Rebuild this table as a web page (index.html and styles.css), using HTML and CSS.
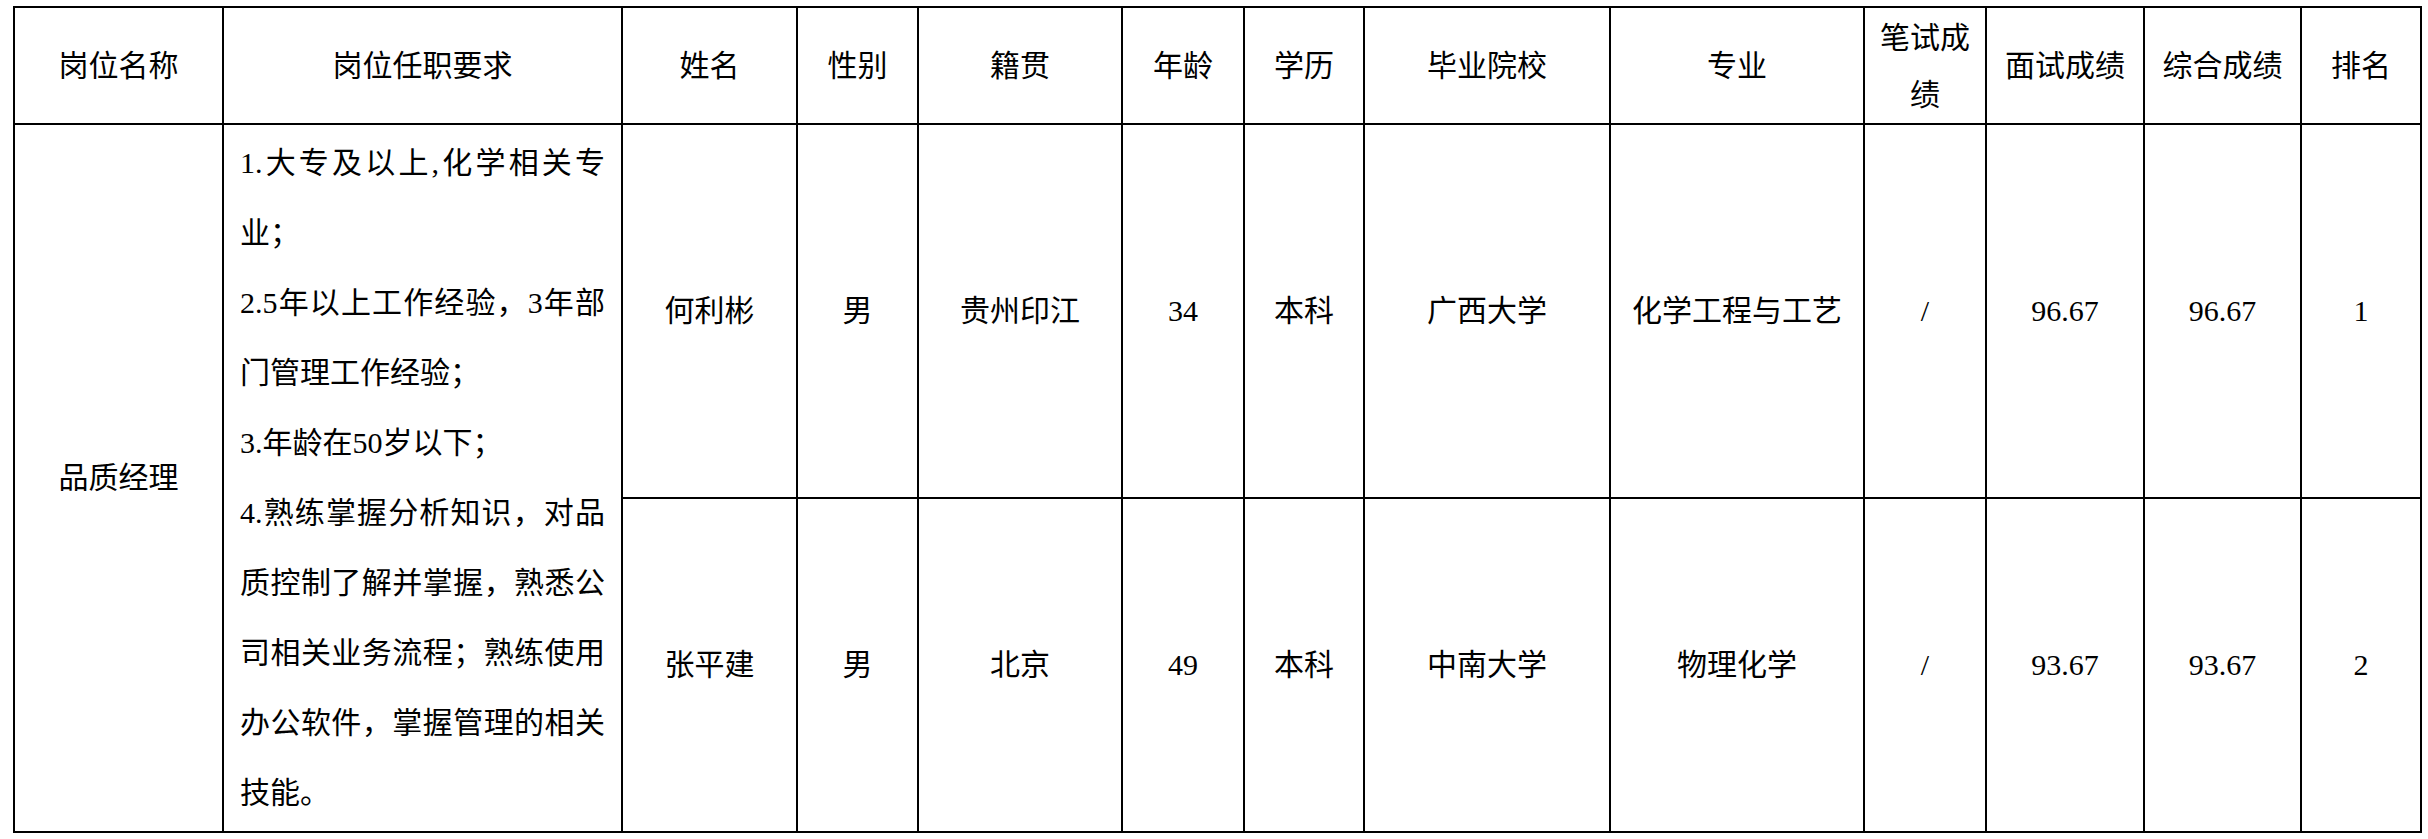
FILE: index.html
```html
<!DOCTYPE html>
<html lang="zh-CN">
<head>
<meta charset="utf-8">
<title>品质经理 面试成绩</title>
<link rel="stylesheet" href="styles.css">
</head>
<body>
<div class="page">
  <table class="score-table">
    <colgroup>
      <col class="c-post">
      <col class="c-req">
      <col class="c-name">
      <col class="c-sex">
      <col class="c-origin">
      <col class="c-age">
      <col class="c-edu">
      <col class="c-school">
      <col class="c-major">
      <col class="c-written">
      <col class="c-interview">
      <col class="c-total">
      <col class="c-rank">
    </colgroup>
    <thead>
      <tr class="head-row">
        <th>岗位名称</th>
        <th>岗位任职要求</th>
        <th>姓名</th>
        <th>性别</th>
        <th>籍贯</th>
        <th>年龄</th>
        <th>学历</th>
        <th>毕业院校</th>
        <th>专业</th>
        <th class="wrap">笔试成绩</th>
        <th>面试成绩</th>
        <th>综合成绩</th>
        <th>排名</th>
      </tr>
    </thead>
    <tbody>
      <tr class="row-first">
        <td rowspan="2">品质经理</td>
        <td rowspan="2" class="req">
          <p>1.大专及以上,化学相关专业；</p>
          <p>2.5年以上工作经验，3年部门管理工作经验；</p>
          <p>3.年龄在50岁以下；</p>
          <p>4.熟练掌握分析知识，对品质控制了解并掌握，熟悉公司相关业务流程；熟练使用办公软件，掌握管理的相关技能。</p>
        </td>
        <td>何利彬</td>
        <td>男</td>
        <td>贵州印江</td>
        <td>34</td>
        <td>本科</td>
        <td>广西大学</td>
        <td>化学工程与工艺</td>
        <td>/</td>
        <td>96.67</td>
        <td>96.67</td>
        <td>1</td>
      </tr>
      <tr class="row-second">
        <td>张平建</td>
        <td>男</td>
        <td>北京</td>
        <td>49</td>
        <td>本科</td>
        <td>中南大学</td>
        <td>物理化学</td>
        <td>/</td>
        <td>93.67</td>
        <td>93.67</td>
        <td>2</td>
      </tr>
    </tbody>
  </table>
</div>
</body>
</html>
```

FILE: styles.css
```css
html, body {
  margin: 0;
  padding: 0;
  background: #ffffff;
}

body {
  font-family: "Liberation Serif", "Noto Sans CJK SC", serif;
  color: #000000;
}

.page {
  padding: 6px 0 0 13px;
}

.score-table {
  border-collapse: collapse;
  table-layout: fixed;
  width: 2407px;
  font-size: 30px;
}

.score-table th,
.score-table td {
  border: 2px solid #000000;
  padding: 0 8px;
  text-align: center;
  vertical-align: middle;
  font-weight: normal;
  line-height: 40px;
}

.score-table th.wrap {
  line-height: 57px;
  padding: 0 12px;
}

.head-row { height: 117px; }
.row-first { height: 374px; }
.row-second { height: 334px; }

.score-table td.req {
  padding: 0 16px;
  text-align: justify;
  line-height: 70px;
}

.req p {
  margin: 0;
  text-align: justify;
}

.c-post { width: 209px; }
.c-req { width: 399px; }
.c-name { width: 175px; }
.c-sex { width: 121px; }
.c-origin { width: 204px; }
.c-age { width: 122px; }
.c-edu { width: 120px; }
.c-school { width: 246px; }
.c-major { width: 254px; }
.c-written { width: 122px; }
.c-interview { width: 158px; }
.c-total { width: 157px; }
.c-rank { width: 120px; }
```
